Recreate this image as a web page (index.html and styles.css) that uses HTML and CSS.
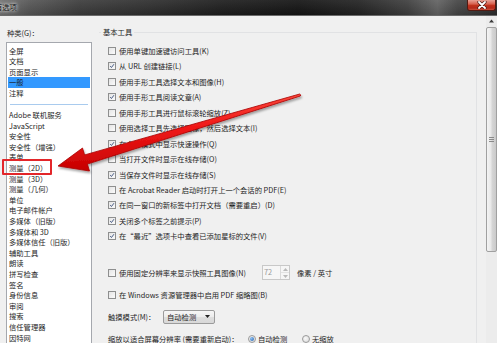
FILE: index.html
```html
<!DOCTYPE html>
<html lang="zh-CN">
<head>
<meta charset="utf-8">
<title>首选项</title>
<link rel="stylesheet" href="styles.css">
</head>
<body>
<div class="window">
  <div class="titlebar">
    <span class="title">首选项</span>
    <div class="close">
      <svg width="12" height="8" viewBox="0 0 12 8"><path d="M3 1 L9 7 M9 1 L3 7" stroke="#4a1a14" stroke-width="3.2" stroke-linecap="round"/><path d="M3 1 L9 7 M9 1 L3 7" stroke="#fff" stroke-width="1.8" stroke-linecap="round"/></svg>
    </div>
  </div>
  <div class="main">
    <div class="left">
      <div class="label">种类(G)：</div>
      <ul class="list">
        <li>全屏</li>
        <li>文档</li>
        <li>页面显示</li>
        <li class="sel">一般</li>
        <li>注释</li>
        <li class="sep"></li>
        <li>Adobe 联机服务</li>
        <li>JavaScript</li>
        <li>安全性</li>
        <li>安全性（增强）</li>
        <li>表单</li>
        <li>测量（2D）</li>
        <li>测量（3D）</li>
        <li>测量（几何）</li>
        <li>单位</li>
        <li>电子邮件帐户</li>
        <li>多媒体（旧版）</li>
        <li>多媒体和 3D</li>
        <li>多媒体信任（旧版）</li>
        <li>辅助工具</li>
        <li>朗读</li>
        <li>拼写检查</li>
        <li>签名</li>
        <li>身份信息</li>
        <li>审阅</li>
        <li>搜索</li>
        <li>信任管理器</li>
        <li>因特网</li>
      </ul>
    </div>
    <div class="right">
      <fieldset class="group">
        <legend>基本工具</legend>
        <div class="row"><span class="cb"></span>使用单键加速键访问工具(K)</div>
        <div class="row"><span class="cb"><svg viewBox="0 0 8 8"><path d="M1.6 4.1 L3.3 6 L6.6 1.6" class="tick"/></svg></span>从 URL 创建链接(L)</div>
        <div class="row"><span class="cb"></span>使用手形工具选择文本和图像(H)</div>
        <div class="row"><span class="cb"><svg viewBox="0 0 8 8"><path d="M1.6 4.1 L3.3 6 L6.6 1.6" class="tick"/></svg></span>使用手形工具阅读文章(A)</div>
        <div class="row"><span class="cb"></span>使用手形工具进行鼠标滚轮缩放(Z)</div>
        <div class="row"><span class="cb"></span>使用选择工具先选择图像，然后选择文本(I)</div>
        <div class="row"><span class="cb"><svg viewBox="0 0 8 8"><path d="M1.6 4.1 L3.3 6 L6.6 1.6" class="tick"/></svg></span>在全屏模式中显示快速操作(Q)</div>
        <div class="row"><span class="cb"></span>当打开文件时显示在线存储(O)</div>
        <div class="row"><span class="cb"><svg viewBox="0 0 8 8"><path d="M1.6 4.1 L3.3 6 L6.6 1.6" class="tick"/></svg></span>当保存文件时显示在线存储(S)</div>
        <div class="row"><span class="cb"></span>在 Acrobat Reader 启动时打开上一个会话的 PDF(E)</div>
        <div class="row"><span class="cb"><svg viewBox="0 0 8 8"><path d="M1.6 4.1 L3.3 6 L6.6 1.6" class="tick"/></svg></span>在同一窗口的新标签中打开文档（需要重启）(D)</div>
        <div class="row"><span class="cb"><svg viewBox="0 0 8 8"><path d="M1.6 4.1 L3.3 6 L6.6 1.6" class="tick"/></svg></span>关闭多个标签之前提示(P)</div>
        <div class="row"><span class="cb"><svg viewBox="0 0 8 8"><path d="M1.6 4.1 L3.3 6 L6.6 1.6" class="tick"/></svg></span>在“最近”选项卡中查看已添加星标的文件(V)</div>

        <div class="row2 first">
          <span class="cb"></span><span class="lbl-res">使用固定分辨率来显示快照工具图像(N)</span>
          <div class="spin">
            <span class="spin-val">72</span>
            <span class="spin-btns">
              <span class="spin-btn"><svg width="5" height="3" viewBox="0 0 5 3"><path d="M0 3 L2.5 0 L5 3Z" fill="#b9b9b9"/></svg></span>
              <span class="spin-btn"><svg width="5" height="3" viewBox="0 0 5 3"><path d="M0 0 L2.5 3 L5 0Z" fill="#b9b9b9"/></svg></span>
            </span>
          </div>
          <span class="unit">像素 / 英寸</span>
        </div>
        <div class="row2"><span class="cb"></span>在 Windows 资源管理器中启用 PDF 缩略图(B)</div>
        <div class="row2">
          <span class="lbl-touch">触摸模式(M)：</span>
          <div class="combo"><span class="combo-text">自动检测</span><svg width="5" height="3" viewBox="0 0 5 3"><path d="M0 0 L5 0 L2.5 3Z" fill="#222"/></svg></div>
        </div>
        <div class="row2">
          <span class="lbl-zoom">缩放以适合屏幕分辨率 (需要重新启动)：</span>
          <span class="opt opt1"><span class="radio on"></span>自动检测</span>
          <span class="opt"><span class="radio"></span>无缩放</span>
        </div>
      </fieldset>
    </div>
    <div class="scrollbar">
      <div class="sb-up"><svg width="11" height="11" viewBox="0 0 11 11"><path d="M3 6.5 L5.5 3.5 L8 6.5Z" fill="#3a3a3a"/></svg></div>
      <div class="sb-thumb"><span class="grip"></span></div>
    </div>
  </div>

  <div class="redbox"></div>
  <svg class="arrow" width="497" height="343" viewBox="0 0 497 343">
    <defs>
      <linearGradient id="ag" x1="0" y1="0" x2="0.15" y2="1">
        <stop offset="0" stop-color="#ff5a4a"/>
        <stop offset="0.5" stop-color="#f01818"/>
        <stop offset="1" stop-color="#c40000"/>
      </linearGradient>
      <filter id="sh" x="-10%" y="-10%" width="130%" height="140%">
        <feDropShadow dx="1" dy="2" stdDeviation="1.3" flood-color="#000" flood-opacity="0.35"/>
      </filter>
    </defs>
    <polygon points="58,166 82.5,148 84.6,154.9 299.7,94 300.8,95 300.3,96 87.4,164.1 89.5,171" fill="url(#ag)" stroke="#a80000" stroke-width="0.8" stroke-linejoin="round" filter="url(#sh)"/>
  </svg>
</div>
</body>
</html>
```

FILE: styles.css
```css
* { box-sizing: border-box; }
html, body { margin: 0; padding: 0; }
body {
  width: 497px;
  height: 343px;
  overflow: hidden;
  background: #f0f0f0;
  font-family: "Noto Sans CJK SC", "Microsoft YaHei", sans-serif;
  font-size: 7.3px;
  color: #1e1e1e;
}
.window {
  position: relative;
  width: 497px;
  height: 343px;
  overflow: hidden;
}

/* title bar */
.titlebar {
  height: 16px;
  display: flex;
  align-items: flex-start;
  justify-content: space-between;
  background:
    linear-gradient(180deg, rgba(255,255,255,0.08), rgba(0,0,0,0.1)),
    linear-gradient(90deg, #707070 0, #555 6%, #3c3c3c 16%, #2e2e2e 30%, #1d1d1d 45%, #141414 60%, #222 72%, #3e3e3e 82%, #626262 88%, #454545 92%, #2c2c2c 100%);
  border-bottom: 1px solid #6a6a6a;
}
.title {
  margin-left: -5px;
  margin-top: 2px;
  line-height: 10px;
  color: #111;
  text-shadow: 0 0 3px #fff, 0 0 5px rgba(255,255,255,0.8);
}
.close {
  width: 29px;
  height: 11px;
  margin-right: 1px;
  display: flex;
  align-items: center;
  justify-content: center;
  background: linear-gradient(180deg, #e7a194 0, #d76250 40%, #c0321c 55%, #b3291a 80%, #c8503a 100%);
  border: 1px solid #521a12;
  border-top: 0;
  border-radius: 0 0 3px 3px;
}

/* main layout */
.main {
  display: flex;
  height: 327px;
}
.left {
  width: 92px;
  flex: none;
  padding-left: 6px;
}
.label {
  margin-top: 12px;
  padding-left: 1px;
  line-height: 10px;
}
.list {
  list-style: none;
  margin: 4px 0 0;
  padding: 2.7px 1px 0;
  height: 320px;
  background: #fff;
  border: 1px solid #a5a8ae;
}
.list li {
  height: 10.6px;
  line-height: 10.6px;
  padding-left: 1px;
  white-space: nowrap;
}
.list li.sel {
  background: #3399ff;
  color: #1a1a1a;
}
.list li.sep {
  height: 11.4px;
  display: flex;
  align-items: center;
  padding: 0 2px;
}
.list li.sep::after {
  content: "";
  flex: 1;
  height: 1px;
  background: #a9cbee;
}

.right {
  width: 378px;
  flex: none;
  margin-left: 7px;
}
.group {
  margin: 11px 0 0;
  padding: 6.3px 0 0 9px;
  min-width: 0;
  height: 330px;
  border: 1px solid #e1e2e4;
  border-left: 0;
  border-bottom: 0;
}
.group legend {
  margin-left: -7px;
  padding: 0 2px;
  line-height: 10px;
}
.row {
  height: 15.45px;
  display: flex;
  align-items: center;
  white-space: nowrap;
}
.row2 {
  height: 22px;
  display: flex;
  align-items: center;
  white-space: nowrap;
}
.row2.first { margin-top: 17.8px; }

.cb {
  width: 8px;
  height: 8px;
  flex: none;
  margin-right: 3px;
  border: 1px solid #8e8f8f;
  background: linear-gradient(135deg, #e4e4e4, #fbfbfb);
  display: flex;
}
.cb svg { width: 6px; height: 6px; }
.tick {
  fill: none;
  stroke: #3a4f7c;
  stroke-width: 1.2;
}

.lbl-res { width: 143px; flex: none; }
.spin {
  width: 28px;
  height: 15px;
  flex: none;
  display: flex;
  border: 1px solid #c8c8c8;
  background: #f6f6f6;
}
.spin-val {
  flex: 1;
  padding-left: 1px;
  line-height: 13px;
  color: #9a9a9a;
}
.spin-btns {
  width: 9px;
  display: flex;
  flex-direction: column;
  border-left: 1px solid #dadada;
}
.spin-btn {
  flex: 1;
  display: flex;
  align-items: center;
  justify-content: center;
}
.spin-btn + .spin-btn { border-top: 1px solid #e2e2e2; }
.unit { margin-left: 7px; }

.lbl-touch { width: 55px; flex: none; }
.combo {
  width: 52px;
  height: 14px;
  flex: none;
  display: flex;
  align-items: center;
  justify-content: space-between;
  padding: 0 4px 0 3px;
  border: 1px solid #9b9b9b;
  border-radius: 2px;
  background: linear-gradient(180deg, #f6f6f6 0, #ececec 50%, #dedede 51%, #d8d8d8 100%);
}

.lbl-zoom { width: 140px; flex: none; }
.opt {
  display: flex;
  align-items: center;
}
.opt1 { width: 54px; flex: none; }
.radio {
  width: 8px;
  height: 8px;
  margin-right: 2px;
  border-radius: 50%;
  border: 1px solid #9a9a9a;
  background: radial-gradient(circle at 40% 40%, #f8f8f8, #d8d8d8);
  display: flex;
  align-items: center;
  justify-content: center;
}
.radio.on::after {
  content: "";
  width: 4px;
  height: 4px;
  border-radius: 50%;
  background: radial-gradient(circle at 35% 35%, #8fc1f2, #1f5fb0);
}

/* scrollbar */
.scrollbar {
  width: 11px;
  flex: none;
  margin-left: 9px;
  background: #ececec;
}
.sb-up { height: 11px; display: flex; }
.sb-thumb {
  height: 225px;
  display: flex;
  align-items: center;
  justify-content: center;
  border: 1px solid #a0a0a0;
  border-radius: 2px;
  background: linear-gradient(90deg, #f4f4f4 0, #e8e8e8 45%, #d6d6d6 55%, #cacaca 100%);
}
.grip {
  width: 5px;
  height: 5px;
  background: repeating-linear-gradient(180deg, #8a8a8a 0, #8a8a8a 1px, transparent 1px, transparent 2px);
}

/* annotations */
.redbox {
  position: absolute;
  left: 2px;
  top: 159px;
  width: 50px;
  height: 16px;
  border: 2px solid #e3262a;
  border-radius: 1px;
}
.arrow {
  position: absolute;
  left: 0;
  top: 0;
  pointer-events: none;
}
```
